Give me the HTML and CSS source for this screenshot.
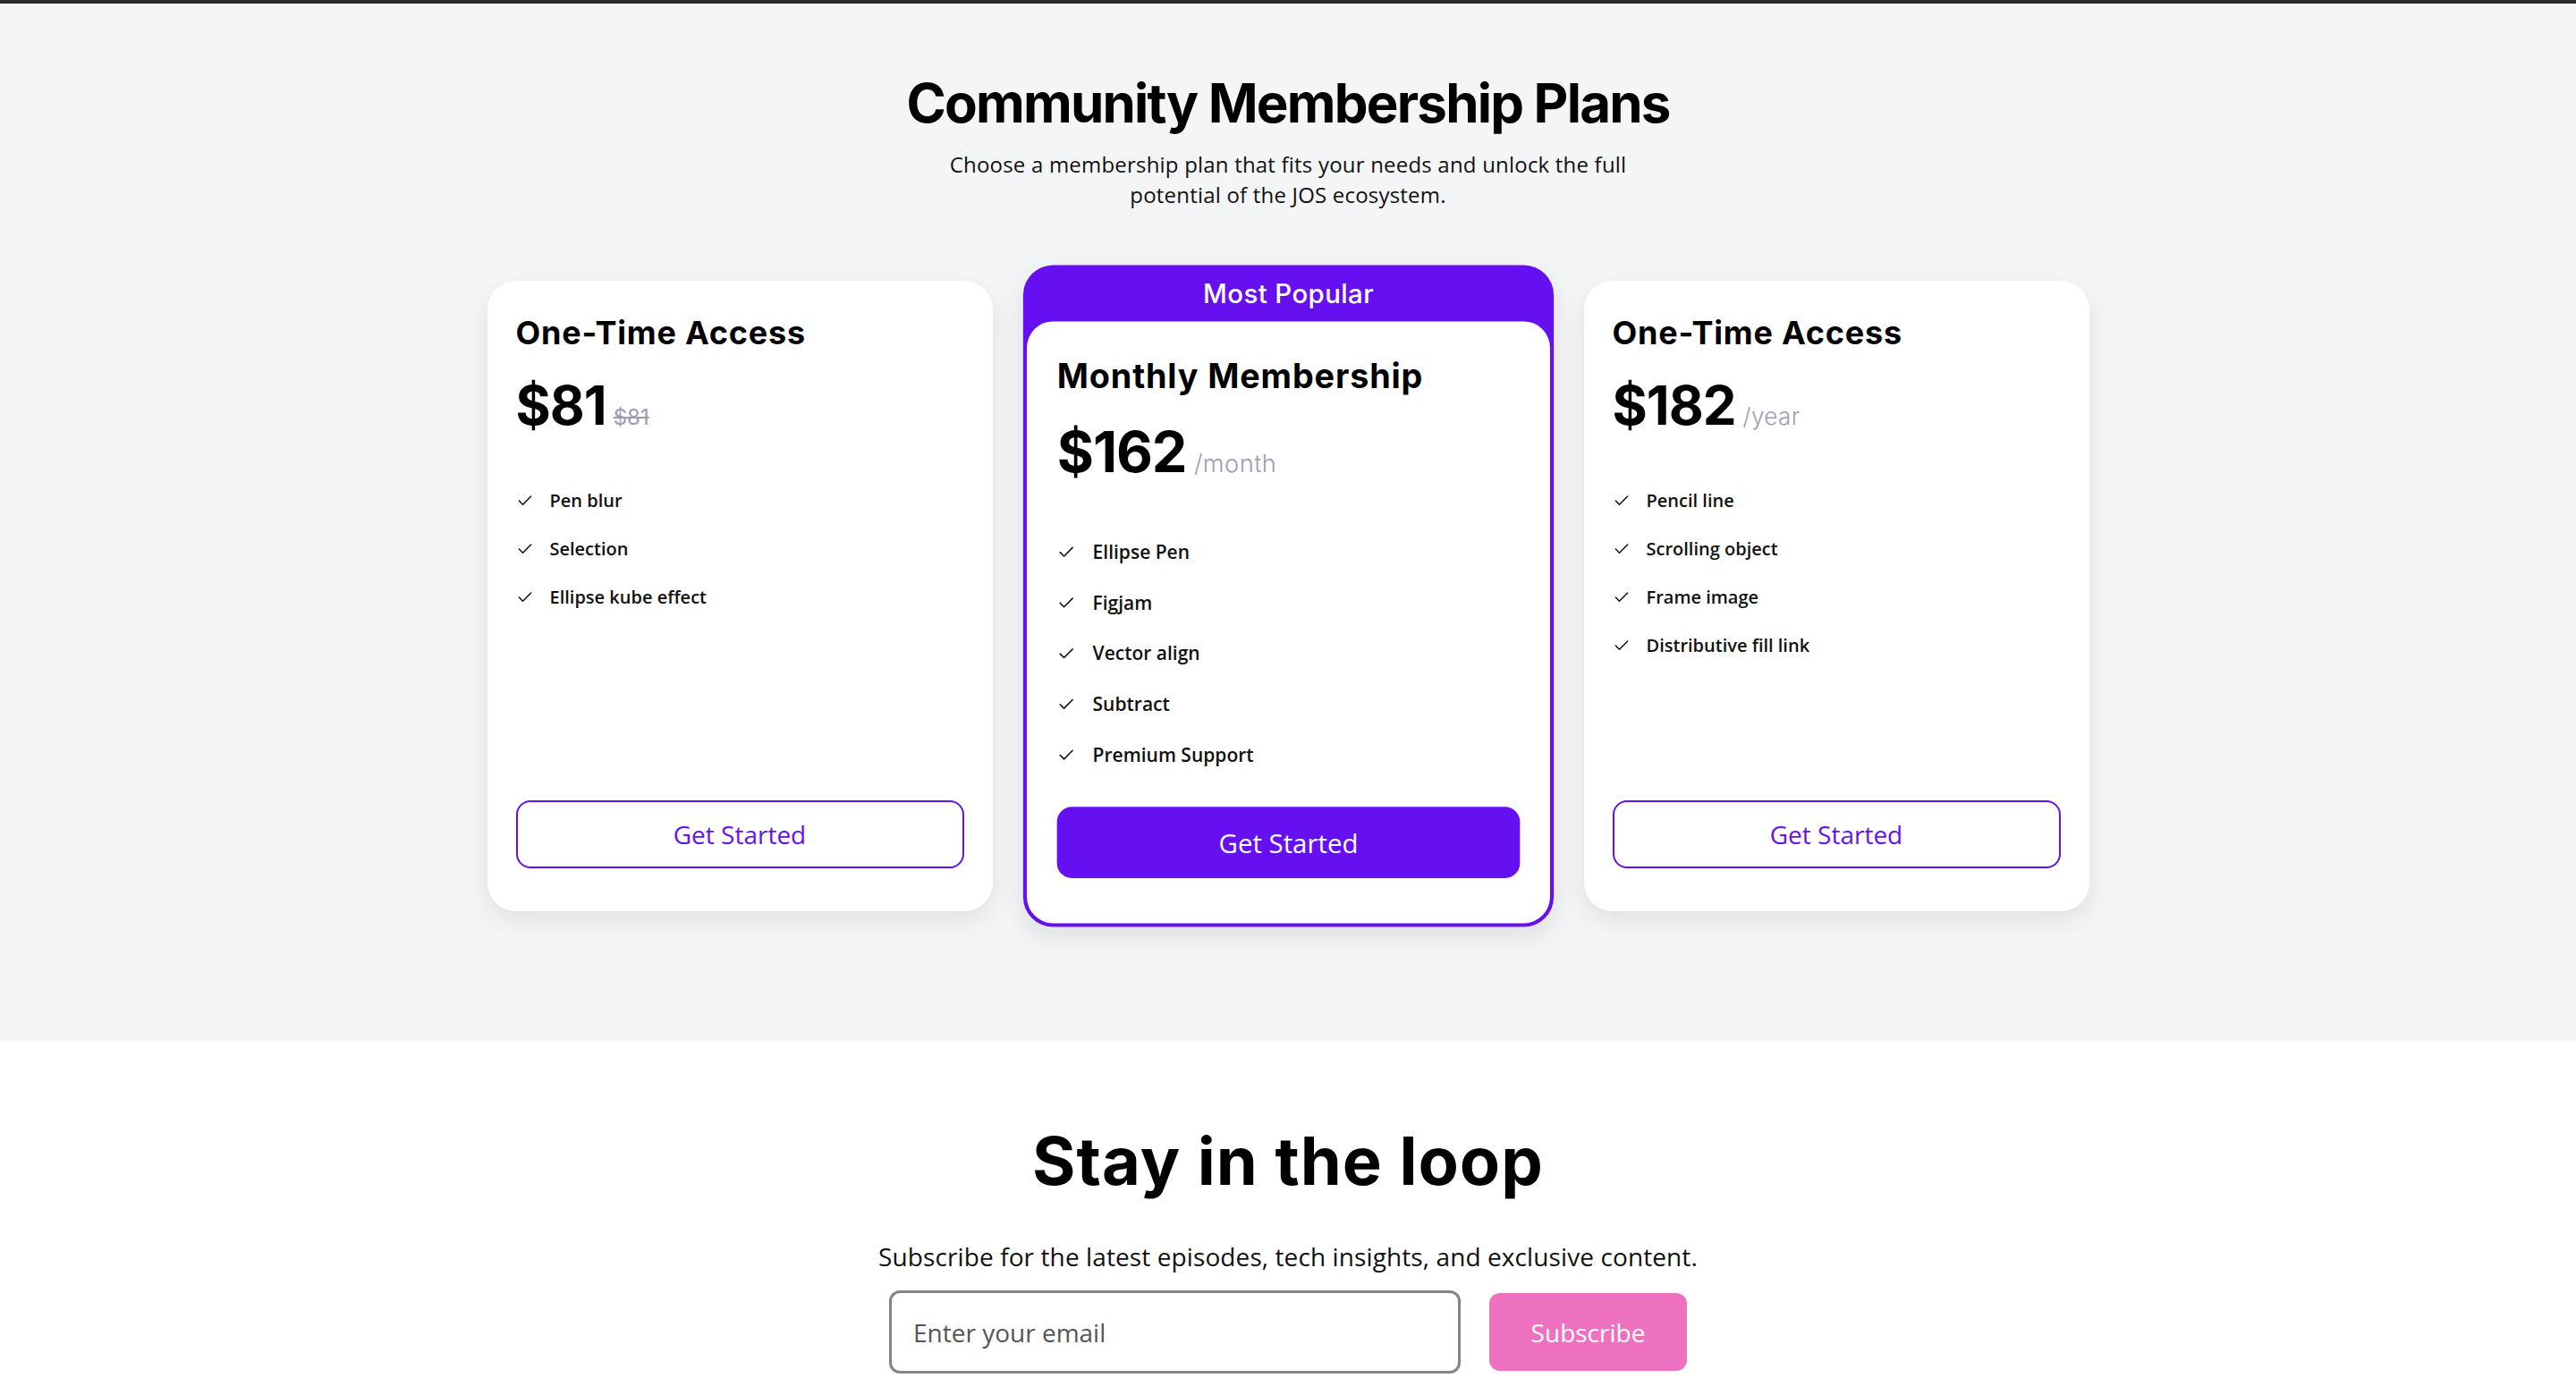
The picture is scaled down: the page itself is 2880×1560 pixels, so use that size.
FILE: index.html
```html
<!DOCTYPE html>
<html lang="en">
<head>
<meta charset="utf-8">
<title>Community Membership Plans</title>
<link rel="stylesheet" href="styles.css">
</head>
<body>
<div class="topbar"></div>
<section class="pricing">
  <h1 class="title">Community Membership Plans</h1>
  <p class="lead">Choose a membership plan that fits your needs and unlock the full<br>potential of the JOS ecosystem.</p>
  <div class="plans">
    <div class="card">
      <div class="card-body">
        <h3 class="plan-name">One-Time Access</h3>
        <div class="price"><span class="amount">$81</span><span class="old">$81</span></div>
        <ul class="features">
          <li><svg class="check" viewBox="0 0 24 24"><polyline points="20 6 9 17 4 12"/></svg>Pen blur</li>
          <li><svg class="check" viewBox="0 0 24 24"><polyline points="20 6 9 17 4 12"/></svg>Selection</li>
          <li><svg class="check" viewBox="0 0 24 24"><polyline points="20 6 9 17 4 12"/></svg>Ellipse kube effect</li>
        </ul>
        <button class="btn">Get Started</button>
      </div>
    </div>
    <div class="card popular">
      <div class="badge">Most Popular</div>
      <div class="card-body">
        <h3 class="plan-name">Monthly Membership</h3>
        <div class="price"><span class="amount">$162</span><span class="per">/month</span></div>
        <ul class="features">
          <li><svg class="check" viewBox="0 0 24 24"><polyline points="20 6 9 17 4 12"/></svg>Ellipse Pen</li>
          <li><svg class="check" viewBox="0 0 24 24"><polyline points="20 6 9 17 4 12"/></svg>Figjam</li>
          <li><svg class="check" viewBox="0 0 24 24"><polyline points="20 6 9 17 4 12"/></svg>Vector align</li>
          <li><svg class="check" viewBox="0 0 24 24"><polyline points="20 6 9 17 4 12"/></svg>Subtract</li>
          <li><svg class="check" viewBox="0 0 24 24"><polyline points="20 6 9 17 4 12"/></svg>Premium Support</li>
        </ul>
        <button class="btn btn-primary">Get Started</button>
      </div>
    </div>
    <div class="card">
      <div class="card-body">
        <h3 class="plan-name">One-Time Access</h3>
        <div class="price"><span class="amount">$182</span><span class="per">/year</span></div>
        <ul class="features">
          <li><svg class="check" viewBox="0 0 24 24"><polyline points="20 6 9 17 4 12"/></svg>Pencil line</li>
          <li><svg class="check" viewBox="0 0 24 24"><polyline points="20 6 9 17 4 12"/></svg>Scrolling object</li>
          <li><svg class="check" viewBox="0 0 24 24"><polyline points="20 6 9 17 4 12"/></svg>Frame image</li>
          <li><svg class="check" viewBox="0 0 24 24"><polyline points="20 6 9 17 4 12"/></svg>Distributive fill link</li>
        </ul>
        <button class="btn">Get Started</button>
      </div>
    </div>
  </div>
</section>
<section class="newsletter">
  <h2 class="nl-title">Stay in the loop</h2>
  <p class="nl-sub">Subscribe for the latest episodes, tech insights, and exclusive content.</p>
  <form class="nl-form">
    <input class="nl-input" type="email" placeholder="Enter your email">
    <button class="nl-btn" type="button">Subscribe</button>
  </form>
</section>
</body>
</html>
```
FILE: styles.css
```css
* { box-sizing: border-box; }

body {
  margin: 0;
  font-family: "Open Sans", "Lato", sans-serif;
  color: #000;
  background: #ffffff;
}

.topbar {
  height: 4px;
  background: #2c2c2c;
}

.pricing {
  background: #f4f5f7;
  padding: 75px 0 145px;
  text-align: center;
}

.title {
  margin: 0;
  font-family: "Inter", sans-serif;
  font-weight: 700;
  font-size: 60px;
  line-height: 1.2;
  letter-spacing: -1.8px;
  color: #000;
}

.lead {
  margin: 16px auto 0;
  font-size: 24px;
  line-height: 34px;
  letter-spacing: 0.2px;
  color: #111;
}

.plans {
  display: grid;
  grid-template-columns: repeat(3, 565px);
  gap: 48px;
  justify-content: center;
  margin-top: 79px;
  text-align: left;
}

.card {
  background: #fff;
  border-radius: 32px;
  box-shadow: 0 10px 28px rgba(0, 0, 0, 0.09);
  display: flex;
  flex-direction: column;
}

.card-body {
  flex: 1;
  display: flex;
  flex-direction: column;
  padding: 36px 32px 48px;
}

.card.popular {
  background: #6610f2;
  padding: 0 4px 4px;
  transform: scale(1.05);
  position: relative;
  z-index: 1;
}

.popular .badge {
  height: 60px;
  display: flex;
  align-items: center;
  justify-content: center;
  color: #fff;
  font-family: "Inter", sans-serif;
  font-weight: 500;
  font-size: 28px;
  letter-spacing: 0.4px;
  padding-top: 2px;
}

.popular .card-body {
  background: #fff;
  border-radius: 28px;
}

.plan-name {
  margin: 0;
  font-family: "Inter", sans-serif;
  font-weight: 700;
  font-size: 36px;
  line-height: 44px;
  letter-spacing: 0.8px;
  color: #000;
}

.price {
  display: flex;
  align-items: baseline;
  margin-top: 29px;
}

.amount {
  font-family: "Inter", sans-serif;
  font-weight: 700;
  font-size: 60px;
  line-height: 1;
  letter-spacing: -1px;
}

.old,
.per {
  font-family: "Inter", sans-serif;
  font-size: 26px;
  line-height: 1;
  letter-spacing: 0.4px;
  color: #9d9db2;
  margin-left: 8px;
}

.old {
  text-decoration: line-through;
  font-size: 24px;
  letter-spacing: 0;
  font-weight: 400;
}

.per {
  font-weight: 300;
}

.features {
  list-style: none;
  padding: 0;
  margin: 62px 0 40px;
  display: flex;
  flex-direction: column;
  gap: 24px;
}

.features li {
  display: flex;
  align-items: center;
  font-size: 20px;
  line-height: 30px;
  font-weight: 600;
  color: #111;
}

.check {
  width: 20px;
  height: 20px;
  margin-right: 18px;
  fill: none;
  stroke: #111;
  stroke-width: 1.8;
  stroke-linecap: round;
  stroke-linejoin: round;
  flex-shrink: 0;
}

.btn {
  margin-top: auto;
  height: 76px;
  width: 100%;
  border: 2px solid #6610f2;
  border-radius: 16px;
  background: #fff;
  color: #6610f2;
  font-family: "Open Sans", sans-serif;
  font-size: 28px;
  padding-bottom: 2px;
  cursor: pointer;
}

.btn-primary {
  background: #6610f2;
  color: #fff;
}

.newsletter {
  background: #fff;
  text-align: center;
  padding: 91px 0 60px;
}

.nl-title {
  margin: 0;
  font-family: "Inter", sans-serif;
  font-weight: 700;
  font-size: 74px;
  line-height: 86px;
  letter-spacing: 1px;
  color: #000;
}

.nl-sub {
  margin: 45px 0 0;
  font-size: 28px;
  line-height: 1.4;
  letter-spacing: 0.1px;
  color: #111;
}

.nl-form {
  margin-top: 18px;
  display: flex;
  justify-content: center;
  align-items: center;
  gap: 32px;
}

.nl-input {
  width: 639px;
  height: 93px;
  border: 3px solid #858585;
  border-radius: 12px;
  padding: 0 24px;
  font-family: "Open Sans", sans-serif;
  font-size: 28px;
  color: #333;
  background: #fff;
}

.nl-input::placeholder {
  color: #555;
}

.nl-btn {
  width: 221px;
  height: 87px;
  border: none;
  border-radius: 12px;
  background: #ee71c0;
  color: #fff;
  font-family: "Open Sans", sans-serif;
  font-size: 28px;
  cursor: pointer;
}
```
